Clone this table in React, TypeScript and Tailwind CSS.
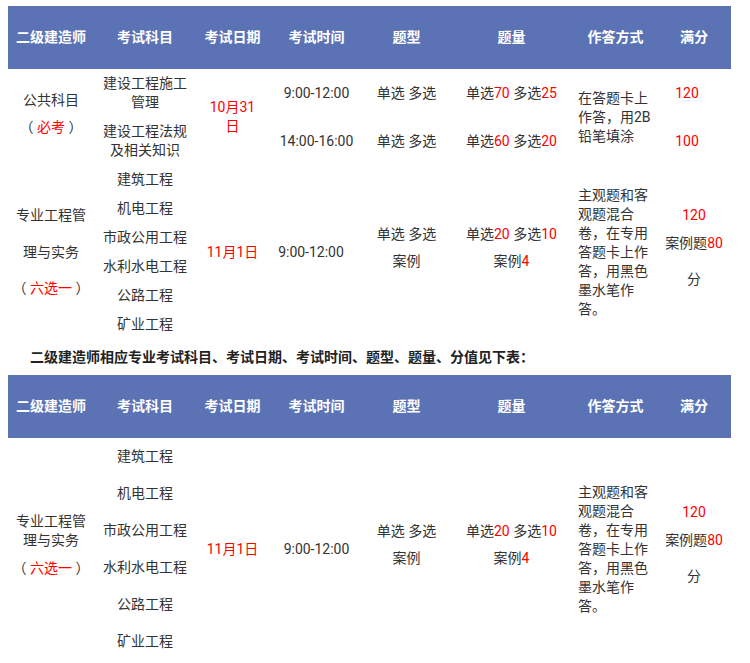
const headers = ["二级建造师", "考试科目", "考试日期", "考试时间", "题型", "题量", "作答方式", "满分"];

const subjects = ["建筑工程", "机电工程", "市政公用工程", "水利水电工程", "公路工程", "矿业工程"];

function Red({ children }: { children: React.ReactNode }) {
  return <span className="text-[#ff0000]">{children}</span>;
}

function Header() {
  return (
    <>
      {headers.map((h) => (
        <div
          key={h}
          className="h-[63px] bg-[#5b73b5] flex items-center justify-center text-white font-bold text-[14px]"
        >
          {h}
        </div>
      ))}
    </>
  );
}

const cell = "flex flex-col items-center justify-center text-center";

function AnswerWay({ lines }: { lines: string[] }) {
  return (
    <div className="flex flex-col justify-center pl-1 text-left leading-[19px]">
      {lines.map((l, i) => (
        <div key={i} className="whitespace-nowrap">{l}</div>
      ))}
    </div>
  );
}

const cols = "grid grid-cols-[86px_102px_73px_95px_85px_125px_83px_74px]";

export default function App() {
  return (
    <div
      className="bg-white min-h-screen pt-[6px] pl-2 text-[14px] text-[#333]"
      style={{ fontFamily: 'Roboto, "Noto Sans CJK SC", sans-serif' }}
    >
      {/* 表一 */}
      <div className={`${cols} w-[723px]`}>
        <Header />
      </div>

      {/* 公共科目 */}
      <div className={`${cols} w-[723px] grid-rows-[48px_48px]`}>
        <div className={`${cell} row-span-2 pb-[7px] leading-[27px]`}>
          <div>公共科目</div>
          <div>（ <Red>必考</Red> ）</div>
        </div>
        <div className={`${cell} leading-[19px]`}>
          <div>建设工程施工</div>
          <div>管理</div>
        </div>
        <div className={`${cell} row-span-2 leading-[19px] text-[#ff0000]`}>
          <div>10月31</div>
          <div>日</div>
        </div>
        <div className={cell}>9:00-12:00</div>
        <div className={cell}>单选 多选</div>
        <div className={cell}>
          <div>单选<Red>70</Red> 多选<Red>25</Red></div>
        </div>
        <div className="row-span-2 flex">
          <AnswerWay lines={["在答题卡上", "作答，用2B", "铅笔填涂"]} />
        </div>
        <div className={`${cell} pr-[14px]`}><Red>120</Red></div>

        <div className={`${cell} leading-[19px]`}>
          <div>建设工程法规</div>
          <div>及相关知识</div>
        </div>
        <div className={cell}>14:00-16:00</div>
        <div className={cell}>单选 多选</div>
        <div className={cell}>
          <div>单选<Red>60</Red> 多选<Red>20</Red></div>
        </div>
        <div className={`${cell} pr-[14px]`}><Red>100</Red></div>
      </div>

      {/* 专业工程 */}
      <div className={`${cols} w-[723px] grid-rows-[repeat(6,29px)]`}>
        <div className={`${cell} row-span-6`}>
          <div className="leading-[36.5px]">专业工程管</div>
          <div className="leading-[36.5px]">理与实务</div>
          <div className="leading-[36.5px]">（ <Red>六选一</Red> ）</div>
        </div>
        {subjects.map((s, i) => (
          <div key={s} className={cell} style={{ gridColumn: 2, gridRow: i + 1 }}>{s}</div>
        ))}
        <div className={`${cell} text-[#ff0000]`} style={{ gridColumn: 3, gridRow: "1 / span 6" }}>11月1日</div>
        <div className={`${cell} pr-[11px]`} style={{ gridColumn: 4, gridRow: "1 / span 6" }}>9:00-12:00</div>
        <div className={`${cell} pb-[8px] leading-[27px]`} style={{ gridColumn: 5, gridRow: "1 / span 6" }}>
          <div>单选 多选</div>
          <div>案例</div>
        </div>
        <div className={`${cell} pb-[8px] leading-[27px]`} style={{ gridColumn: 6, gridRow: "1 / span 6" }}>
          <div>单选<Red>20</Red> 多选<Red>10</Red></div>
          <div>案例<Red>4</Red></div>
        </div>
        <div className="flex" style={{ gridColumn: 7, gridRow: "1 / span 6" }}>
          <AnswerWay lines={["主观题和客", "观题混合", "卷，在专用", "答题卡上作", "答，用黑色", "墨水笔作", "答。"]} />
        </div>
        <div className={`${cell} pb-[3px]`} style={{ gridColumn: 8, gridRow: "1 / span 6" }}>
          <div className="leading-[28px]"><Red>120</Red></div>
          <div className="leading-[28px] whitespace-nowrap">案例题<Red>80</Red></div>
          <div className="leading-[44px]">分</div>
        </div>
      </div>

      <div className="h-[36px] flex items-center pl-[22px] font-bold text-[#222]">
        二级建造师相应专业考试科目、考试日期、考试时间、题型、题量、分值见下表：
      </div>

      {/* 表二 */}
      <div className={`${cols} w-[723px]`}>
        <Header />
      </div>
      <div className={`${cols} w-[723px] grid-rows-[repeat(6,37px)]`}>
        <div className={cell} style={{ gridColumn: 1, gridRow: "1 / span 6" }}>
          <div className="leading-[19px]">专业工程管</div>
          <div className="leading-[19px]">理与实务</div>
          <div className="leading-[37px]">（ <Red>六选一</Red> ）</div>
        </div>
        {subjects.map((s, i) => (
          <div key={s} className={cell} style={{ gridColumn: 2, gridRow: i + 1 }}>{s}</div>
        ))}
        <div className={`${cell} text-[#ff0000]`} style={{ gridColumn: 3, gridRow: "1 / span 6" }}>11月1日</div>
        <div className={cell} style={{ gridColumn: 4, gridRow: "1 / span 6" }}>9:00-12:00</div>
        <div className={`${cell} pb-[9px] leading-[27px]`} style={{ gridColumn: 5, gridRow: "1 / span 6" }}>
          <div>单选 多选</div>
          <div>案例</div>
        </div>
        <div className={`${cell} pb-[9px] leading-[27px]`} style={{ gridColumn: 6, gridRow: "1 / span 6" }}>
          <div>单选<Red>20</Red> 多选<Red>10</Red></div>
          <div>案例<Red>4</Red></div>
        </div>
        <div className="flex" style={{ gridColumn: 7, gridRow: "1 / span 6" }}>
          <AnswerWay lines={["主观题和客", "观题混合", "卷，在专用", "答题卡上作", "答，用黑色", "墨水笔作", "答。"]} />
        </div>
        <div className={cell} style={{ gridColumn: 8, gridRow: "1 / span 6" }}>
          <div className="leading-[27px]"><Red>120</Red></div>
          <div className="leading-[28px] whitespace-nowrap">案例题<Red>80</Red></div>
          <div className="leading-[45px]">分</div>
        </div>
      </div>
    </div>
  );
}
